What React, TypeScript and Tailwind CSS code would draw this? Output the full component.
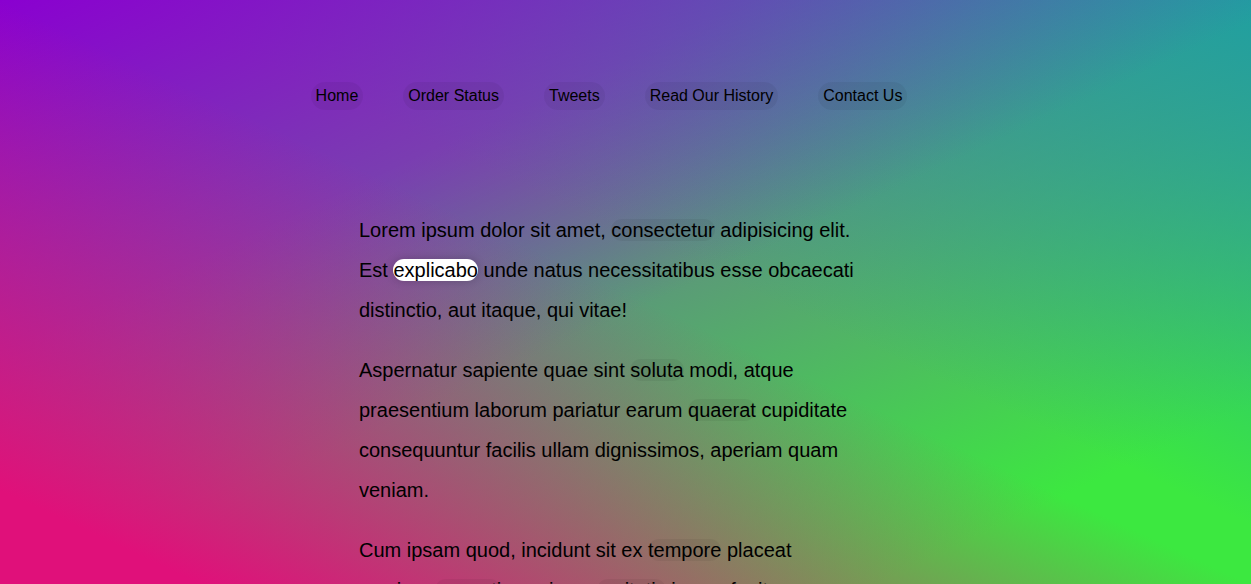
const menu = ["Home", "Order Status", "Tweets", "Read Our History", "Contact Us"];

const Link = ({ children, active }: { children: React.ReactNode; active?: boolean }) => (
  <a
    href="#"
    className={
      active
        ? "rounded-[20px] bg-white text-black no-underline shadow-[0_0_10px_rgba(0,0,0,0.2)]"
        : "rounded-[20px] bg-black/5 text-black no-underline"
    }
  >
    {children}
  </a>
);

export default function App() {
  return (
    <div className="h-screen overflow-hidden bg-[#6e6a9a] bg-[linear-gradient(to_top_right,#e0107a_8%,rgba(224,16,122,0)_50%),linear-gradient(to_bottom_right,#8a00d0_0%,rgba(138,0,208,0)_52%),linear-gradient(to_bottom_left,#20a0a0_0%,rgba(32,160,160,0)_45%),linear-gradient(to_top_left,#3ce840_15%,rgba(60,232,64,0)_70%)] font-['Liberation_Sans',Arial,sans-serif] text-black">
      <div className="pr-[33px] pt-[82px]">
        <nav>
          <ul className="flex list-none justify-center p-0 text-base leading-[18px]">
            {menu.map((item) => (
              <li key={item}>
                <a href="#" className="mx-5 inline-block rounded-[20px] bg-black/5 p-[5px] text-black no-underline">
                  {item}
                </a>
              </li>
            ))}
          </ul>
        </nav>

        <div className="relative mx-auto mt-[100px] flex max-w-[500px] flex-col gap-5 text-[20px] leading-[40px]">
          <p>
            Lorem ipsum dolor sit amet, <Link>consectetur</Link> adipisicing elit. Est{" "}
            <Link active>explicabo</Link> unde natus necessitatibus esse obcaecati distinctio, aut itaque, qui vitae!
          </p>
          <p>
            Aspernatur sapiente quae sint <Link>soluta</Link> modi, atque praesentium laborum pariatur earum{" "}
            <Link>quaerat</Link> cupiditate consequuntur facilis ullam dignissimos, aperiam quam veniam.
          </p>
          <p>
            Cum ipsam quod, incidunt sit ex <Link>tempore</Link> placeat maxime <Link>corrupti</Link> possimus{" "}
            <Link>veritatis</Link> ipsum fugit recusandae est doloremque? Hic, <Link>quibusdam</Link>, nulla.
          </p>
          <p>
            Esse quibusdam, ad, ducimus cupiditate <Link>nulla</Link>, quae magni odit <Link>totam</Link> ut
            consequatur eveniet sunt quam provident sapiente dicta neque quod.
          </p>
        </div>
      </div>
    </div>
  );
}
